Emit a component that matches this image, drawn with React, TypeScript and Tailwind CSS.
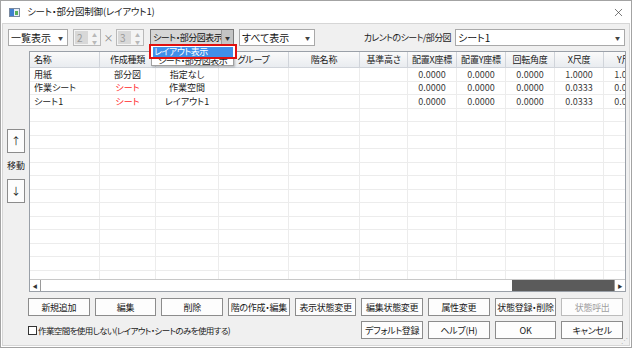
import { X } from 'lucide-react';

const columns = [
  { label: '名称', w: 'w-[70px]', align: 'justify-start pl-[4px]' },
  { label: '作成種類', w: 'w-[56px]', align: 'justify-center' },
  { label: '表示', w: 'w-[63px]', align: 'justify-center' },
  { label: 'グループ', w: 'w-[70px]', align: 'justify-center' },
  { label: '階名称', w: 'w-[71px]', align: 'justify-center' },
  { label: '基準高さ', w: 'w-[48px]', align: 'justify-center' },
  { label: '配置X座標', w: 'w-[49px]', align: 'justify-center' },
  { label: '配置Y座標', w: 'w-[49px]', align: 'justify-center' },
  { label: '回転角度', w: 'w-[49px]', align: 'justify-center' },
  { label: 'X尺度', w: 'w-[49px]', align: 'justify-center' },
  { label: 'Y尺度', w: 'w-[49px]', align: 'justify-center' },
];

const rows = [
  ['用紙', '部分図', '指定なし', '', '', '', '0.0000', '0.0000', '0.0000', '1.0000', '1.0000'],
  ['作業シート', 'シート', '作業空間', '', '', '', '0.0000', '0.0000', '0.0000', '0.0333', '0.0333'],
  ['シート1', 'シート', 'レイアウト1', '', '', '', '0.0000', '0.0000', '0.0000', '0.0333', '0.0333'],
];

const emptyRows = Array.from({ length: 13 });

function Combo({ label, className }: { label: string; className: string }) {
  return (
    <div className={`h-[17px] bg-white border border-[#a9a9a9] flex items-center justify-between pl-[2px] pr-[4px] ${className}`}>
      <span className="text-[10px] leading-none text-[#111] whitespace-nowrap">{label}</span>
      <span className="text-[5px] text-[#444] leading-none">▼</span>
    </div>
  );
}

function Spinner({ value }: { value: string }) {
  return (
    <div className="w-[28px] h-[17px] flex border border-[#b9b9b9] bg-[#f4f4f4]">
      <div className="w-[15px] h-full bg-[#d8d8d8] border border-[#f4f4f4] flex items-center pl-[2px] text-[10px] text-[#9a9a9a] leading-none">
        {value}
      </div>
      <div className="flex-1 flex flex-col items-center justify-center text-[5px] text-[#b8b8b8] leading-[7px]">
        <span>▲</span>
        <span>▼</span>
      </div>
    </div>
  );
}

function Btn({ label, disabled }: { label: string; disabled?: boolean }) {
  return (
    <button
      className={`h-full w-full bg-[#fdfdfd] border border-[#8c8c8c] text-[9px] tracking-[-0.3px] leading-none whitespace-nowrap flex items-center justify-center ${
        disabled ? 'text-[#a0a0a0] border-[#bcbcbc]' : 'text-[#1a1a1a]'
      }`}
    >
      {label}
    </button>
  );
}

export default function App() {
  return (
    <div className="w-[632px] h-[348px] bg-white border border-[#a3a3a3] flex flex-col overflow-hidden font-['Noto_Sans_CJK_JP',sans-serif] [font-feature-settings:'palt'] text-[#1a1a1a] select-none">
      {/* Title bar */}
      <div className="h-[22px] flex items-center shrink-0">
        <div className="ml-[8px] w-[11px] h-[9px] border border-[#7a8aa0] bg-[#e8eef6] flex">
          <div className="w-[4px] h-full bg-[#3f7fcf]" />
          <div className="w-[3px] h-[4px] mt-[2px] ml-[1px] bg-[#59b15a]" />
        </div>
        <span className="ml-[7px] text-[9.5px] tracking-[-0.2px] leading-none text-[#1a1a1a]">シート・部分図制御(レイアウト1)</span>
        <div className="flex-1" />
        <X className="w-[13px] h-[13px] mr-[6px] text-[#333]" strokeWidth={1.2} />
      </div>

      {/* Body */}
      <div className="flex-1 bg-[#f0f0f0] mx-[1px] mb-[1px] border border-[#d6d6d6] flex flex-col relative">
        {/* Toolbar */}
        <div className="flex items-center h-[17px] mt-[5px] pl-[5px] pr-[4px]">
          <Combo label="一覧表示" className="w-[60px]" />
          <div className="ml-[5px]">
            <Spinner value="2" />
          </div>
          <span className="w-[15px] text-center text-[10px] text-[#888] leading-none">×</span>
          <Spinner value="3" />
          <div className="ml-[6px] w-[84px] h-[17px] bg-[#d6d6d6] border border-[#7a7a7a] flex items-center">
            <span className="flex-1 pl-[2px] text-[9px] tracking-[-0.5px] leading-none text-[#111] whitespace-nowrap overflow-hidden">シート・部分図表示</span>
            <span className="w-[12px] h-full bg-[#c4c4c4] border-l border-[#9a9a9a] flex items-center justify-center text-[5px] text-[#333]">▼</span>
          </div>
          <Combo label="すべて表示" className="ml-[5px] w-[76px]" />
          <div className="flex-1" />
          <span className="text-[9px] tracking-[-0.6px] leading-none text-[#1a1a1a] mr-[4px]">カレントのシート/部分図</span>
          <Combo label="シート1" className="w-[170px]" />
        </div>

        {/* Main */}
        <div className="flex mt-[5px]">
          <div className="w-[26px] flex flex-col items-center pt-[78px]">
            <div className="w-[18px] h-[24px] bg-[#fdfdfd] border border-[#8c8c8c] flex items-center justify-center text-[10px] leading-none">↑</div>
            <span className="mt-[8px] text-[9px] leading-none">移動</span>
            <div className="mt-[9px] w-[18px] h-[24px] bg-[#fdfdfd] border border-[#8c8c8c] flex items-center justify-center text-[10px] leading-none">↓</div>
          </div>

          <div className="w-[597px] h-[241px] border border-[#9aa0a8] bg-white flex flex-col overflow-hidden">
            <div className="flex-1 overflow-hidden">
              <div className="flex w-[700px] h-[16px] bg-gradient-to-b from-[#fafafa] to-[#e9ecf0] border-b border-[#d0d4da]">
                {columns.map((c) => (
                  <div key={c.label} className={`${c.w} shrink-0 h-full border-r border-[#d0d4da] flex items-center ${c.align} text-[9px] tracking-[-0.2px] leading-none whitespace-nowrap overflow-hidden`}>
                    {c.label}
                  </div>
                ))}
              </div>
              {rows.map((r, i) => (
                <div key={i} className="flex w-[700px] h-[13.5px] border-b border-[#ececec]">
                  {columns.map((c, j) => (
                    <div
                      key={j}
                      className={`${c.w} shrink-0 h-full border-r border-[#ececec] flex items-center ${c.align} text-[9px] leading-none whitespace-nowrap overflow-hidden ${
                        j === 1 && r[j] === 'シート' ? 'text-[#ff2a2a]' : j >= 6 ? 'text-[#3a3a3a]' : 'text-[#1a1a1a]'
                      }`}
                    >
                      {r[j]}
                    </div>
                  ))}
                </div>
              ))}
              {emptyRows.map((_, i) => (
                <div key={i} className="flex w-[700px] h-[13.5px] border-b border-[#ececec]">
                  {columns.map((c, j) => (
                    <div key={j} className={`${c.w} shrink-0 h-full border-r border-[#ececec]`} />
                  ))}
                </div>
              ))}
            </div>
            {/* Horizontal scrollbar */}
            <div className="h-[12px] shrink-0 border-t border-[#c8c8c8] flex bg-white">
              <div className="w-[11px] h-full border-r border-[#9a9a9a] flex items-center justify-center text-[5px] text-[#333]">◀</div>
              <div className="flex-1 flex justify-end">
                <div className="w-[102px] h-full bg-[#5b5b5b]" />
              </div>
              <div className="w-[11px] h-full border-l border-[#9a9a9a] flex items-center justify-center text-[5px] text-[#333]">▶</div>
            </div>
          </div>
        </div>

        {/* Buttons */}
        <div className="grid grid-cols-9 gap-x-[5px] pl-[25px] pr-[6px] mt-[6px] h-[18px]">
          <Btn label="新規追加" />
          <Btn label="編集" />
          <Btn label="削除" />
          <Btn label="階の作成・編集" />
          <Btn label="表示状態変更" />
          <Btn label="編集状態変更" />
          <Btn label="属性変更" />
          <Btn label="状態登録・削除" />
          <Btn label="状態呼出" disabled />
        </div>
        <div className="grid grid-cols-9 gap-x-[5px] pl-[25px] pr-[6px] mt-[5px] h-[18px]">
          <div className="col-span-5 flex items-center">
            <span className="w-[9px] h-[9px] border border-[#333] bg-white mr-[1px]" />
            <span className="text-[8.5px] tracking-[-0.6px] leading-none whitespace-nowrap">作業空間を使用しない(レイアウト・シートのみを使用する)</span>
          </div>
          <Btn label="デフォルト登録" />
          <Btn label="ヘルプ(H)" />
          <Btn label="OK" />
          <Btn label="キャンセル" />
        </div>
        <div className="absolute right-[1px] bottom-[1px] text-[7px] leading-none text-[#b0b0b0]">⋰</div>

        {/* Open dropdown list */}
        <div className="absolute left-[148px] top-[21px] w-[83px] h-[21px] bg-white border border-[#a0a0a0] shadow-[1px_1px_2px_rgba(0,0,0,0.25)] overflow-hidden">
          <div className="mt-[9px] h-[11px] text-[9px] tracking-[-0.5px] leading-[11px] pl-[6px] whitespace-nowrap">シート・部分図表示</div>
        </div>
        {/* Highlight annotation around the selected item */}
        <div className="absolute left-[146px] top-[20px] w-[88px] h-[15px] border-2 border-[#e01010] bg-white">
          <div className="mx-[2px] mt-[1px] h-[10px] bg-[#3f8fea] text-white text-[9px] tracking-[-0.5px] leading-[10px] pl-[1px] whitespace-nowrap">レイアウト表示</div>
        </div>
      </div>
    </div>
  );
}
